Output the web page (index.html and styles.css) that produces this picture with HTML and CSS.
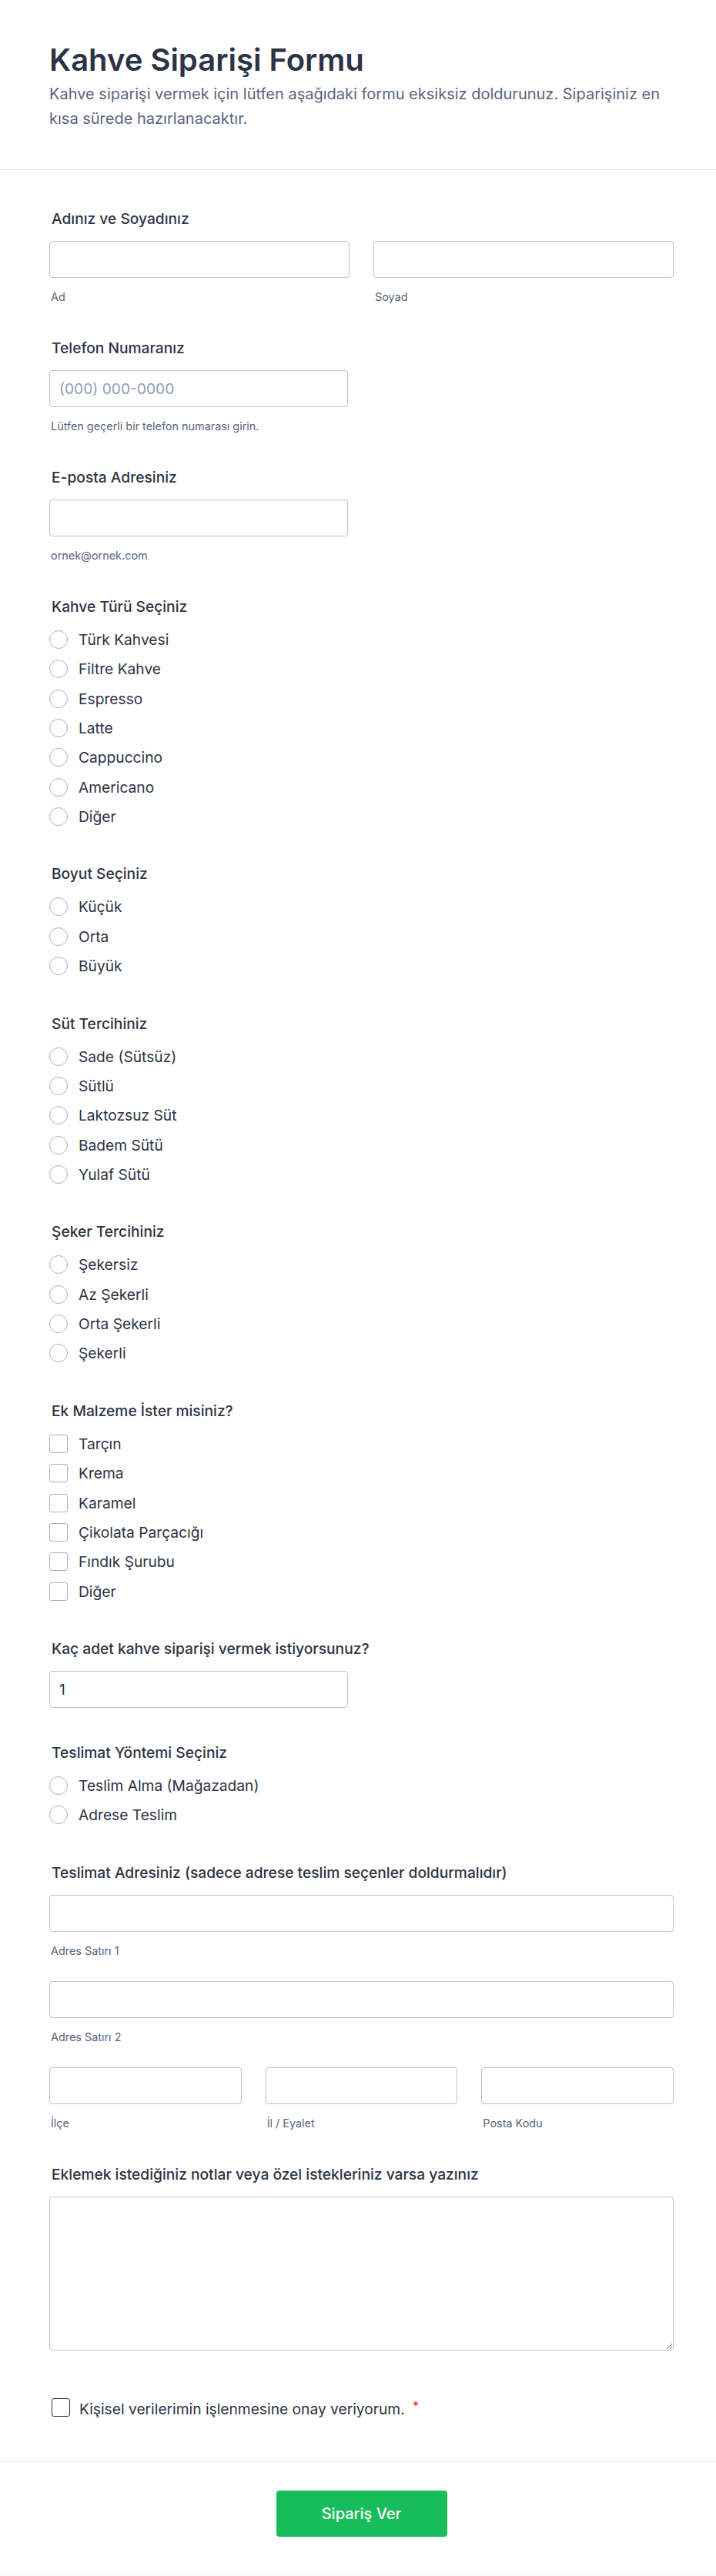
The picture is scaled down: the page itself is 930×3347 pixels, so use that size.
FILE: index.html
```html
<!DOCTYPE html>
<html lang="tr">
<head>
<meta charset="utf-8">
<title>Kahve Siparişi Formu</title>
<link rel="stylesheet" href="styles.css">
</head>
<body>
<div class="page">
  <header class="form-header">
    <h1 class="title">Kahve Siparişi Formu</h1>
    <p class="desc">Kahve siparişi vermek için lütfen aşağıdaki formu eksiksiz doldurunuz. Siparişiniz en kısa sürede hazırlanacaktır.</p>
  </header>

  <main class="form-body">
    <div class="field">
      <label class="label">Adınız ve Soyadınız</label>
      <div class="grid-2">
        <div><input class="input" type="text"><span class="sublabel">Ad</span></div>
        <div><input class="input" type="text"><span class="sublabel">Soyad</span></div>
      </div>
    </div>

    <div class="field">
      <label class="label">Telefon Numaranız</label>
      <input class="input input--half" type="text" placeholder="(000) 000-0000">
      <span class="sublabel">Lütfen geçerli bir telefon numarası girin.</span>
    </div>

    <div class="field">
      <label class="label">E-posta Adresiniz</label>
      <input class="input input--half" type="text">
      <span class="sublabel">ornek@ornek.com</span>
    </div>

    <div class="field field--choice">
      <span class="label">Kahve Türü Seçiniz</span>
      <div class="options">
        <label class="option"><input class="radio" type="radio" name="kahve">Türk Kahvesi</label>
        <label class="option"><input class="radio" type="radio" name="kahve">Filtre Kahve</label>
        <label class="option"><input class="radio" type="radio" name="kahve">Espresso</label>
        <label class="option"><input class="radio" type="radio" name="kahve">Latte</label>
        <label class="option"><input class="radio" type="radio" name="kahve">Cappuccino</label>
        <label class="option"><input class="radio" type="radio" name="kahve">Americano</label>
        <label class="option"><input class="radio" type="radio" name="kahve">Diğer</label>
      </div>
    </div>

    <div class="field field--choice">
      <span class="label">Boyut Seçiniz</span>
      <div class="options">
        <label class="option"><input class="radio" type="radio" name="boyut">Küçük</label>
        <label class="option"><input class="radio" type="radio" name="boyut">Orta</label>
        <label class="option"><input class="radio" type="radio" name="boyut">Büyük</label>
      </div>
    </div>

    <div class="field field--choice">
      <span class="label">Süt Tercihiniz</span>
      <div class="options">
        <label class="option"><input class="radio" type="radio" name="sut">Sade (Sütsüz)</label>
        <label class="option"><input class="radio" type="radio" name="sut">Sütlü</label>
        <label class="option"><input class="radio" type="radio" name="sut">Laktozsuz Süt</label>
        <label class="option"><input class="radio" type="radio" name="sut">Badem Sütü</label>
        <label class="option"><input class="radio" type="radio" name="sut">Yulaf Sütü</label>
      </div>
    </div>

    <div class="field field--choice">
      <span class="label">Şeker Tercihiniz</span>
      <div class="options">
        <label class="option"><input class="radio" type="radio" name="seker">Şekersiz</label>
        <label class="option"><input class="radio" type="radio" name="seker">Az Şekerli</label>
        <label class="option"><input class="radio" type="radio" name="seker">Orta Şekerli</label>
        <label class="option"><input class="radio" type="radio" name="seker">Şekerli</label>
      </div>
    </div>

    <div class="field field--choice">
      <span class="label">Ek Malzeme İster misiniz?</span>
      <div class="options">
        <label class="option"><input class="check" type="checkbox">Tarçın</label>
        <label class="option"><input class="check" type="checkbox">Krema</label>
        <label class="option"><input class="check" type="checkbox">Karamel</label>
        <label class="option"><input class="check" type="checkbox">Çikolata Parçacığı</label>
        <label class="option"><input class="check" type="checkbox">Fındık Şurubu</label>
        <label class="option"><input class="check" type="checkbox">Diğer</label>
      </div>
    </div>

    <div class="field field--plain">
      <label class="label">Kaç adet kahve siparişi vermek istiyorsunuz?</label>
      <input class="input input--half" type="text" value="1">
    </div>

    <div class="field field--choice">
      <span class="label">Teslimat Yöntemi Seçiniz</span>
      <div class="options">
        <label class="option"><input class="radio" type="radio" name="teslimat">Teslim Alma (Mağazadan)</label>
        <label class="option"><input class="radio" type="radio" name="teslimat">Adrese Teslim</label>
      </div>
    </div>

    <div class="field">
      <label class="label">Teslimat Adresiniz (sadece adrese teslim seçenler doldurmalıdır)</label>
      <div class="stack">
        <div><input class="input" type="text"><span class="sublabel">Adres Satırı 1</span></div>
        <div><input class="input" type="text"><span class="sublabel">Adres Satırı 2</span></div>
        <div class="grid-3">
          <div><input class="input" type="text"><span class="sublabel">İlçe</span></div>
          <div><input class="input" type="text"><span class="sublabel">İl / Eyalet</span></div>
          <div><input class="input" type="text"><span class="sublabel">Posta Kodu</span></div>
        </div>
      </div>
    </div>

    <div class="field field--notes">
      <label class="label">Eklemek istediğiniz notlar veya özel istekleriniz varsa yazınız</label>
      <textarea class="textarea"></textarea>
    </div>

    <label class="consent">
      <input class="consent-box" type="checkbox">
      <span class="consent-text">Kişisel verilerimin işlenmesine onay veriyorum.<span class="req">*</span></span>
    </label>
  </main>

  <footer class="form-footer">
    <button class="submit" type="button">Sipariş Ver</button>
  </footer>
</div>
</body>
</html>
```

FILE: styles.css
```css
* {
  box-sizing: border-box;
}

body {
  margin: 0;
  background: #ffffff;
  font-family: Inter, "Noto Sans", "Liberation Sans", sans-serif;
  color: #2c3345;
}

.page {
  width: 930px;
}

.form-header {
  padding: 54px 55px 50px 64px;
  border-bottom: 1px solid #d8dce6;
}

.title {
  margin: 0 0 4px;
  font-size: 40px;
  line-height: 48px;
  font-weight: 600;
  color: #2c3345;
}

.desc {
  margin: 0;
  font-size: 20px;
  line-height: 32px;
  color: #57647e;
}

.form-body {
  padding: 51px 55px 58px 64px;
  display: flex;
  flex-direction: column;
}

.field {
  margin-bottom: 44px;
}

.field--choice {
  margin-bottom: 50.5px;
}

.field--plain {
  margin-bottom: 46px;
}

.field--notes {
  margin-bottom: 62px;
}

.label {
  display: block;
  padding-left: 3px;
  margin-bottom: 17px;
  font-size: 19.2px;
  line-height: 24px;
  font-weight: 500;
  color: #2c3345;
}

.field--choice .label {
  margin-bottom: 19px;
}

.input {
  display: block;
  width: 100%;
  height: 48px;
  margin: 0;
  padding: 0 12px;
  border: 1px solid #b9c0cd;
  border-radius: 4px;
  background: #ffffff;
  font-family: Inter, "Noto Sans", sans-serif;
  font-size: 19.2px;
  color: #2c3345;
}

.input::placeholder {
  color: #8f9bb3;
}

.input--half {
  width: 388px;
}

.sublabel {
  display: block;
  margin-top: 15px;
  padding-left: 2px;
  font-size: 14.4px;
  line-height: 20px;
  color: #57647e;
}

.grid-2 {
  display: grid;
  grid-template-columns: 1fr 1fr;
  column-gap: 31px;
}

.grid-3 {
  display: grid;
  grid-template-columns: 1fr 1fr 1fr;
  column-gap: 31px;
}

.stack {
  display: flex;
  flex-direction: column;
  gap: 29px;
}

.options {
  display: flex;
  flex-direction: column;
  gap: 14.33px;
}

.option {
  display: flex;
  align-items: center;
  gap: 14px;
  height: 24px;
  font-size: 19.2px;
  line-height: 24px;
  color: #2c3345;
}

.radio,
.check {
  appearance: none;
  -webkit-appearance: none;
  flex: none;
  margin: 0;
  width: 24px;
  height: 24px;
  border: 1px solid #a9b0be;
  background: #ffffff;
}

.radio {
  border-radius: 50%;
}

.check {
  border-radius: 3px;
}

.textarea {
  display: block;
  width: 100%;
  height: 200px;
  margin: 0;
  padding: 12px;
  border: 1px solid #b9c0cd;
  border-radius: 4px;
  background: #ffffff;
  font-family: Inter, "Noto Sans", sans-serif;
  font-size: 19.2px;
  resize: vertical;
}

.consent {
  display: flex;
  align-items: center;
  gap: 12px;
  padding-left: 3px;
  height: 24px;
  font-size: 19.2px;
  line-height: 24px;
  color: #2c3345;
}

.consent-box {
  appearance: none;
  -webkit-appearance: none;
  flex: none;
  margin: 0;
  width: 24px;
  height: 24px;
  border: 1.5px solid #2c3345;
  border-radius: 3px;
  background: #ffffff;
}

.req {
  margin-left: 10px;
  font-size: 15px;
  font-weight: 700;
  color: #f23a3c;
  vertical-align: 6px;
}

.form-footer {
  display: flex;
  justify-content: center;
  padding: 37px 55px 49px 64px;
  border-top: 1px solid #e6e9ef;
  border-bottom: 1px solid #f0f2f6;
}

.submit {
  width: 222px;
  height: 60px;
  border: none;
  border-radius: 4px;
  background: #18bd5b;
  color: #ffffff;
  font-family: Inter, "Noto Sans", sans-serif;
  font-size: 20px;
  font-weight: 500;
}
```
